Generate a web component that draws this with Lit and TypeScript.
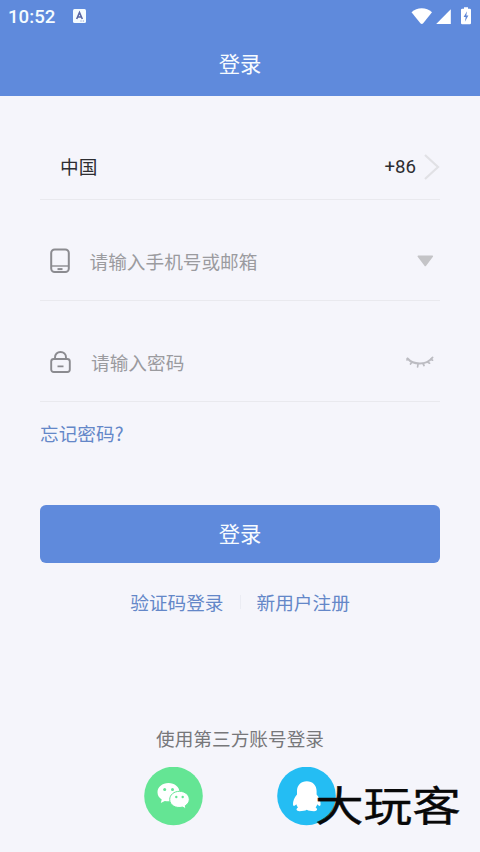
import { LitElement, html, css } from "lit";
import { customElement } from "lit/decorators.js";

@customElement("status-bar")
class StatusBar extends LitElement {
  static styles = css`
    :host { display: flex; align-items: center; height: 32px; padding: 0 8px 0 8px; color: #f4fbff; }
    .time { font: 500 18.67px/32px Roboto, sans-serif; padding-top: 2px; flex: none; }
    .badge { margin-left: 18px; flex: none; }
    .signals { margin-left: auto; flex: none; }
    svg { display: block; }
  `;
  render() {
    return html`
      <span class="time">10:52</span>
      <svg class="badge" width="13" height="14" viewBox="0 0 13 14">
        <rect width="13" height="14" rx="1.5" fill="#f4fbff" />
        <path d="M3.7 10 6.5 3.5 9.3 10M4.7 8h3.6" fill="none" stroke="#5967a5" stroke-width="1.6" />
        <path d="M7.5 12h1M9.8 12h1" stroke="#7d8dc4" />
      </svg>
      <svg class="signals" width="61" height="18" viewBox="411 7 61 18">
        <path d="M411.5 12.2C417 7 426.5 7 432 12.2L423.2 23.2Q421.8 24.6 420.4 23.2Z" fill="#fff" />
        <path d="M450.8 9.3V24H436.2Z" fill="#fff" />
        <path d="M464 7.2h4v1.6h1.8q1.2 0 1.2 1.2v13q0 1.2-1.2 1.2h-7.6q-1.2 0-1.2-1.2V10q0-1.2 1.2-1.2h1.8z" fill="#fff" />
        <path d="M467 11.2 463.6 17h2.1l-.8 4.8 3.5-6.2h-2.1z" fill="#5f87d6" />
      </svg>
    `;
  }
}

@customElement("app-root")
class AppRoot extends LitElement {
  static styles = css`
    :host {
      display: flex; flex-direction: column; box-sizing: border-box; position: relative;
      width: 480px; height: 852px; overflow: hidden; background: #f5f5fb;
      font: 18.67px/28px "Noto Sans CJK SC", sans-serif; color: #2d2d31;
    }
    svg { display: block; flex: none; }
    header { height: 96px; background: #5f8adc; flex: none; }
    .title { height: 62px; display: flex; align-items: center; justify-content: center; color: #f6fbff; font-size: 21.33px; }
    main { padding: 0 40px; display: flex; flex-direction: column; }
    .row { display: flex; align-items: center; box-sizing: border-box; height: 101px; padding-top: 22px; border-bottom: 1px solid #e9e9ee; }
    .country { height: 104px; padding: 38px 0 0 20px; }
    .row > span { padding-bottom: 1px; }
    .row > .code { margin-left: auto; font-family: Roboto, sans-serif; padding: 0; }
    .arrow { margin-left: 8px; }
    .field { padding-left: 10px; color: #9b9b9f; }
    .hint { margin-left: 18.5px; }
    .hint.password { margin-left: 20px; }
    .end { margin-left: auto; }
    .forgot { color: #6487c8; margin-top: 17px; }
    .login {
      margin: 58px 0 0; height: 58px; border: 0; border-radius: 6px; padding: 0 0 2px;
      background: #5f8adc; color: #f6fbff; font: 21.33px/30px "Noto Sans CJK SC", sans-serif;
    }
    .links { display: flex; justify-content: center; align-items: center; margin-top: 25px; color: #6487c8; }
    .sep { width: 1px; height: 14px; margin: 0 16px; background: #ebecf3; }
    .other { margin-top: 108px; text-align: center; color: #77777a; }
    .social { display: flex; justify-content: center; gap: 74px; margin-top: 15px; }
    .mark {
      position: absolute; left: 315px; top: 778px; font-size: 45px; line-height: 52px; font-weight: 400;
      color: #080808; -webkit-text-stroke: 0.4px #080808;
      transform: scale(1.08, 0.9); transform-origin: left center; white-space: nowrap;
    }
  `;
  render() {
    return html`
      <header>
        <status-bar></status-bar>
        <div class="title">登录</div>
      </header>
      <main>
        <div class="row country">
          <span>中国</span><span class="code">+86</span>
          <svg class="arrow" width="16" height="28" viewBox="0 0 16 28">
            <path d="M1 2 14 14 1 26" fill="none" stroke="#e1e1e5" stroke-width="2.2" />
          </svg>
        </div>
        <div class="row field">
          <svg width="21" height="26" viewBox="0 0 21 26" fill="none" stroke="#8b8b90" stroke-width="2">
            <rect x="1.2" y="1.5" width="17.6" height="22.6" rx="3.5" />
            <path d="M1.5 18h17" stroke-width="1.4" /><path d="M7.5 21.1h5" />
          </svg>
          <span class="hint">请输入手机号或邮箱</span>
          <svg class="end" width="24" height="14" viewBox="0 0 24 14">
            <path d="M2.3 2.3h14L9.3 11.5z" fill="#c4c4c7" stroke="#c4c4c7" stroke-width="1.6" stroke-linejoin="round" />
          </svg>
        </div>
        <div class="row field">
          <svg width="21" height="24" viewBox="0 0 21 24" fill="none" stroke="#8b8b90" stroke-width="1.9">
            <rect x="1.2" y="9" width="18.6" height="13" rx="2.5" />
            <path d="M5 9V7.5C5 4.2 7.3 2 10.5 2S16 4.2 16 7.5V9M7.5 16.4h6" />
          </svg>
          <span class="hint password">请输入密码</span>
          <svg class="end" width="34" height="14" viewBox="0 0 34 14" fill="none" stroke="#bcbcc2" stroke-width="1.7" stroke-linecap="round">
            <path d="M1.5 3.5C7 9.7 20 11 26.5 2.5" stroke-width="2" />
            <path d="M1.5 3.5 1 5M6 7 4.5 9M12 9l-.4 3M17 8.5l1 2M21.5 7l2 1.2M25 4.2l1.5 1" />
          </svg>
        </div>
        <div class="forgot">忘记密码?</div>
        <button class="login">登录</button>
        <div class="links"><span>验证码登录</span><span class="sep"></span><span>新用户注册</span></div>
        <div class="other">使用第三方账号登录</div>
        <div class="social">
          <svg width="59" height="59" viewBox="144 767 59 59">
            <circle cx="173.5" cy="796" r="29.3" fill="#64e594" />
            <path d="M168.5 783c-6.2 0-11 4-11 9.2 0 3 1.6 5.6 4.2 7.3L160.800 803l4-2.1c7 1.7 14.7-1.8 14.7-8.7 0-5.2-4.8-9.2-11-9.2z" fill="#fff" />
            <path d="M179.5 791.3c-5.6 0-9.8 3.6-9.8 8.2 0 5.8 6.2 9.2 12.8 7.6l3.5 1.8-.7-3.2c2.5-1.5 4-3.7 4-6.2 0-4.6-4.2-8.2-9.8-8.2z" fill="#fff" stroke="#64e594" stroke-width="1" />
            <g fill="#64e594"><circle cx="164.7" cy="789.5" r="1.5" /><circle cx="172.5" cy="789.5" r="1.5" /><circle cx="176.3" cy="797" r="1.2" /><circle cx="182.7" cy="797" r="1.2" /></g>
          </svg>
          <svg width="59" height="59" viewBox="277 767 59 59">
            <circle cx="306.5" cy="796" r="29.3" fill="#24bdf3" />
            <path d="M306.800 781.300C301 781.300 297 785.500 297 791V794.500C294.500 797.500 292.800 801 293 804.500C293.200 806.500 294.500 806.300 296.300 804.200C296.700 805.500 297.200 806.500 298 807.500C295.500 808.800 296.200 811.200 299.500 811.200C303 811.200 305 810.800 306.800 809.800C308.600 810.800 310.600 811.200 314.100 811.200C317.400 811.200 318.100 808.800 315.600 807.500C316.400 806.500 316.900 805.500 317.300 804.200C319.100 806.300 320.400 806.500 320.600 804.500C320.800 801 319.100 797.500 316.600 794.500V791C316.600 785.500 312.600 781.300 306.800 781.300Z" fill="#fff" />
          </svg>
        </div>
      </main>
      <div class="mark">大玩客</div>
    `;
  }
}
